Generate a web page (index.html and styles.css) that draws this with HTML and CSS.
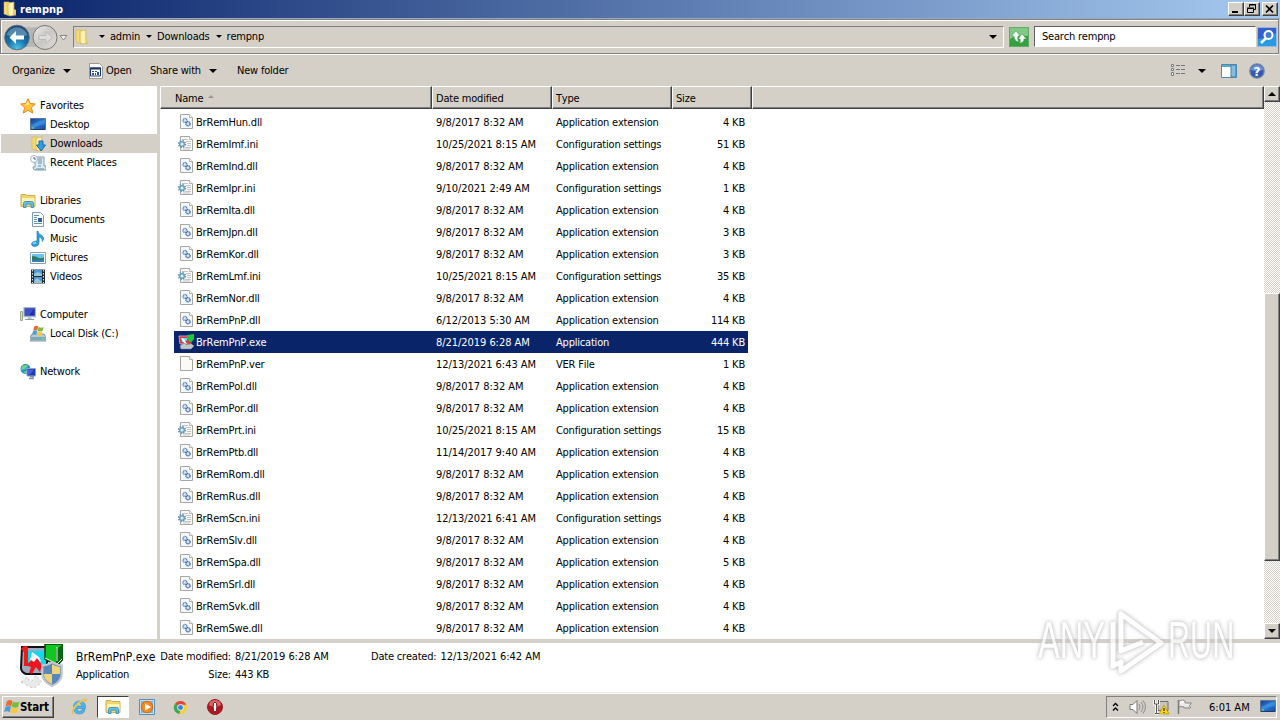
FILE: index.html
```html
<!DOCTYPE html>
<html lang="en">
<head>
<meta charset="utf-8">
<title>rempnp</title>
<link rel="stylesheet" href="styles.css">
</head>
<body>
<svg class="defs" aria-hidden="true">
  <defs>
    <linearGradient id="gold" x2="1"><stop offset="0" stop-color="#f8e795"/><stop offset=".5" stop-color="#fff8c5"/><stop offset="1" stop-color="#dfbd4b"/></linearGradient>
    <linearGradient id="screen" x2="1" y2="1"><stop offset="0" stop-color="#173d8f"/><stop offset=".5" stop-color="#2878d2"/><stop offset="1" stop-color="#164a9c"/></linearGradient>
    <radialGradient id="backfill" cx=".5" cy=".95" r=".9"><stop offset="0" stop-color="#4cc6ea"/><stop offset=".45" stop-color="#1673ab"/><stop offset="1" stop-color="#1b456f"/></radialGradient>
    <linearGradient id="fwdfill" y2="1"><stop offset="0" stop-color="#eee"/><stop offset=".5" stop-color="#c9c7c4"/><stop offset="1" stop-color="#e2e0de"/></linearGradient>
    <linearGradient id="flagfade" x2="0" y2="1"><stop offset="0" stop-color="#fff"/><stop offset="1" stop-color="#ddd"/></linearGradient>
  </defs>
  <symbol id="folder" viewBox="0 0 16 16"><path d="M2 1h5l1 2v12l-6-2z" fill="#f3d978" stroke="#d4b145" stroke-width=".6"/><path d="M6 2l6-1v12l2 1-6 1-2-2z" fill="url(#gold)" stroke="#cba93c" stroke-width=".6"/><path d="M12 8l2 1v5l-2-1z" fill="#e8cd6d"/></symbol>
  <symbol id="dll" viewBox="0 0 16 16"><path d="M2.500.5h9l3 3v11h-12z" fill="#f4f8fc" stroke="#a9a7a2"/><path d="M11.500.5v3h3" fill="#fff" stroke="#b5b3af"/><circle cx="7" cy="6.500" r="2" fill="#dce9f8" stroke="#5c80b5" stroke-width="1.300" stroke-dasharray="1.200 .4"/><circle cx="10" cy="9.800" r="2.100" fill="#d4e3f5" stroke="#3f659f" stroke-width="1.300" stroke-dasharray="1.200 .4"/></symbol>
  <symbol id="ini" viewBox="0 0 16 16"><path d="M2.500.5h9l3 3v11h-12z" fill="#fafafa" stroke="#a5a5a2"/><path d="M11.500.5v3h3" fill="#fff" stroke="#b5b5b2"/><path d="M4 3.500h6M8 5.500h5M9 7.500h4M9 9.500h4M7 11.500h6M5 13h7" fill="none" stroke="#c3c3c3"/><circle cx="4" cy="8" r="3.200" fill="none" stroke="#6593b5" stroke-width="2" stroke-dasharray="1.300 1.200"/><circle cx="4" cy="8" r="2.300" fill="#e4f2fa" stroke="#6c9fbd" stroke-width="1.500"/></symbol>
  <symbol id="blank" viewBox="0 0 16 16"><path d="M2.500.5h9l3 3v11h-12z" fill="#fbfaf7" stroke="#a5a5a0"/><path d="M11.500.5v3h3" fill="#fff" stroke="#b5b5b0"/></symbol>
  <symbol id="exe" viewBox="0 0 44 44"><path d="M3 3h25v27H7q-5-2-5-6z" fill="#9faac0" stroke="#111" stroke-width="2"/><path d="M7 7h20v15H9z" fill="#10d8ef"/><path d="M2 5q3-5 7-2v19H5V8z" fill="#f31818"/><path d="M13 8l7 5 2 4-4 4-8-1z" fill="#f6f9fa"/><path d="M7 22l5-6 3 2 3-4 5 7-2 7-4-5-4 7-3-1 2-6-3-1z" fill="#ec1520"/><path d="M26 0h18v15l-6 7-12-7z" fill="#10c722" stroke="#063d0b" stroke-width="1.500"/><path d="M37 5l6-4v15l-6 6z" fill="#066a12"/><path d="M38 3v14M26 14l12 6 5-5" stroke="#eee" fill="none"/><path d="M2 38l6-5 4 5 5-7 6 7-8 7z" fill="#e9e9e9" stroke="#c1c1c1" stroke-dasharray="2 3"/></symbol>
  <symbol id="exesmall" viewBox="0 0 16 16"><path d="M1 2h9v8H2z" fill="#e2343b" stroke="#9caec0"/><path d="M3 4h6v4H4z" fill="#6edbe9"/><path d="M3 4l3 1 3 5-3-1z" fill="#fff"/><path d="M9 1l7-1v5l-3 4-4-3z" fill="#21c53e"/><path d="M2 12l4-3 3 2 2-3 5 4-3 3H3z" fill="#bec8c9" stroke="#7f8b99" stroke-width=".5"/><path d="M7 7l4 4 2-2-3-3z" fill="#d73e45"/></symbol>
  <symbol id="shield" viewBox="0 0 20 24"><path d="M10 1q5 3 9 3v8q0 7-9 11Q1 19 1 12V4q5 0 9-3z" fill="#5688bd" stroke="#c3c7cb" stroke-width="2"/><path d="M10 12V21.500Q2.500 18 2.500 12zM10 3v9h7.500V5.500Q13 5 10 3z" fill="#f0d477"/></symbol>
  <symbol id="star" viewBox="0 0 16 16"><path d="M8 .7l2.200 4.800 5.200.5-4 3.600 1.300 5.400L8 12.300 3.300 15l1.300-5.400L.6 6l5.200-.5z" fill="#ffc43a" stroke="#e58520"/><path d="M8 3l1.300 3.800H5L8 3z" fill="#ffec94"/></symbol>
  <symbol id="desktop" viewBox="0 0 16 16"><path d="M.5 1.500h15v11H.5z" fill="url(#screen)" stroke="#5c7495"/><path d="M1 8q7-4 14-5v4Q8 8 1 12z" fill="#4ca4e9" opacity=".5"/><path d="M1 12.500h14" stroke="#1c3a70"/><path d="M2 11h2" stroke="#8fd35d"/></symbol>
  <symbol id="down" viewBox="0 0 16 16"><use href="#folder"/><path d="M9 5h4v4h2.500L11 15 6.500 9H9z" fill="#309ce2" stroke="#166cae"/></symbol>
  <symbol id="recent" viewBox="0 0 16 16"><path d="M5 2h9v9h2v4H5q-2 0-2-3h2z" fill="#dcebf2" stroke="#7f9aab"/><path d="M8 4h4M8 6h4M8 8h4M8 11h3M6 14h8" stroke="#668fa8"/><circle cx="4" cy="4" r="3.500" fill="#f7fafc" stroke="#a4b6c3"/><path d="M4 2v2h2" stroke="#567" fill="none"/></symbol>
  <symbol id="library" viewBox="0 0 16 16"><path d="M1 1.500h5l1 1h8v11H1z" fill="#efd571" stroke="#d0b050"/><path d="M2 5h12.500v6H2z" fill="#fff4ae"/><path d="M3.500 14.500v-4q0-2 2-2h6q2 0 2 2v4h-2.500V11H6v3.500z" fill="#64c3ee" stroke="#4292c0"/></symbol>
  <symbol id="document" viewBox="0 0 16 16"><path d="M2.500.5h8l3 3v11h-11z" fill="#f9fcff" stroke="#7d9caf"/><path d="M4 3.500h5M4 5.500h3M4 7.500h3M4 9.500h3M4 11.500h8" stroke="#678faa"/><path d="M8 6h4v4H8z" fill="#315f94"/></symbol>
  <symbol id="music" viewBox="0 0 16 16"><path d="M8 0q0 3 4 4.500 3 2 .5 6 0-4-3.500-4.500v6q-.5 3.500-4 3.500t-3.500-2.500q.5-3 5.500-3V0z" fill="#319ddd" stroke="#1873b5" stroke-width=".6"/><ellipse cx="4.500" cy="12" rx="2" ry="1.300" fill="#78ccf5"/></symbol>
  <symbol id="picture" viewBox="0 0 16 16"><path d="M.5 2.500h15v11H.5z" fill="#fff" stroke="#8ba2ae"/><path d="M2 4h12v8H2z" fill="#6bc4ee"/><path d="M2 6q4 0 7 2 3 1 5-1v5H2z" fill="#2c7c67"/><path d="M2 10h12v2H2z" fill="#347fbc"/></symbol>
  <symbol id="video" viewBox="0 0 16 16"><path d="M1 .5h14v14H1z" fill="#222d36"/><path d="M4 1h8v6H4zM4 8h8v6H4z" fill="#4e9ad0"/><path d="M4 5l4-2 4 2v2H4zM4 12l3-3 5 4v1H4z" fill="#99c6d9"/><path d="M2.500 1v13M13.500 1v13" stroke="#dce3e8" stroke-dasharray="1.500 1.500"/></symbol>
  <symbol id="computer" viewBox="0 0 16 16"><path d="M.5 4.500h2v9h-2z" fill="#d8e1b2" stroke="#a1aa90"/><path d="M4 .5h11.500v9H4z" fill="#1e31b6" stroke="#adb9c7" stroke-width="1.300"/><path d="M5 1.500h9L9 8.500H5z" fill="#5368db" opacity=".6"/><path d="M8 10h3l1 2.500H7z" fill="#bcc6cf"/><path d="M5 12.500h9" stroke="#8b98a5"/></symbol>
  <symbol id="winflag" viewBox="0 0 16 16"><path d="M3 2q3-2 5.500 0L7 7.500Q5 5.500 1.500 7.500z" fill="#ed6a2f"/><path d="M9 2.500q3 2 6.500 0L14 8q-3 1.500-6.500-.5z" fill="#77bd40"/><path d="M1.500 8q3-2 5.500 0l-1.500 5.500Q4 11.500 0 13z" fill="#4c9de0"/><path d="M7.500 8q3 2 6.500.5L12.500 14q-3 1.500-6.500-1z" fill="#fac83f"/></symbol>
  <symbol id="disk" viewBox="0 0 16 16"><path d="M2 8h12l2 3v4H0v-4z" fill="#bccbd2" stroke="#839aa6"/><path d="M1 11h14v3H1z" fill="#7da9ba"/><path d="M12 13h2" stroke="#5dff52"/><use href="#winflag" x="2" y="-1" width="12" height="12"/></symbol>
  <symbol id="network" viewBox="0 0 16 16"><circle cx="5.500" cy="5" r="5" fill="#2495bf"/><path d="M2 2q4-2 6 0L5 5l-4 1zM3 8l4-1v3z" fill="#75cf8c"/><path d="M7 4.500h8.500v7.500H7z" fill="#2039bc" stroke="#8fa8c5"/><path d="M8 5.500h6l-4 5H8z" fill="#4861d6"/><path d="M10 12.500h3v2H9" fill="none" stroke="#7890ad" stroke-width="1.500"/></symbol>
</svg>

<header class="titlebar">
  <svg class="icon"><use href="#folder"/></svg><strong>rempnp</strong>
  <div class="winbuttons">
    <button class="bevel"><svg viewBox="0 0 14 12"><path d="M3 9h6" stroke="#000" stroke-width="2"/></svg></button><button class="bevel"><svg viewBox="0 0 14 12"><path d="M4.500 4V1.500h6v5H9M4 2h7M2.500 5.500h6v4h-6zM2 5h7" stroke="#000" fill="none"/></svg></button><button class="bevel close"><svg viewBox="0 0 14 12"><path d="M3 2.500l7 7M10 2.500l-7 7" stroke="#000" stroke-width="1.700"/></svg></button>
  </div>
</header>

<nav class="navbar">
  <svg class="history" viewBox="0 0 70 31"><path d="M17 3q13 5 27 0v24q-14-5-27 0z" fill="#b5b5b5"/><circle cx="16" cy="15.500" r="12.300" fill="url(#backfill)" stroke="#5c7182"/><path d="M5.500 13a11 11 0 0 1 21 0q-10 4-21 0z" fill="#b5d4e7" opacity=".4"/><path d="M15 9L8.500 15.500 15 22v-4.500h8v-4h-8z" fill="#fff"/><circle cx="44" cy="15.500" r="12" fill="url(#fwdfill)" stroke="#777"/><path d="M38 13.500h7v-4l6 6-6 6v-4h-7z" fill="#dedddb" stroke="#bdbbb8"/><path d="M59 13.500h7L62.500 18z" fill="#eee" stroke="#888"/></svg>
  <div class="address"><svg class="icon"><use href="#folder"/></svg><i class="tri"></i><span>admin</span><i class="tri"></i><span>Downloads</span><i class="tri"></i><span>rempnp</span><i class="tri last"></i></div>
  <svg class="refresh" viewBox="0 0 20 20"><rect x=".5" y=".5" width="19" height="19" fill="#32a33e" stroke="#65a86a"/><path d="M1 1h18v8Q9 8 1 12z" fill="#7fc985"/><path d="M7 4L2.500 9H5q0 5 5 6-2-3-1-6h2zM13 7l4.500 5H15q0 4-5 4 2-1 1-4H9z" fill="#fff" stroke="#368e3d" stroke-width=".5"/></svg>
  <div class="search">Search rempnp</div>
  <svg class="find" viewBox="0 0 20 20"><rect x=".5" y=".5" width="19" height="19" fill="#3460cf" stroke="#99b7e2"/><path d="M1 12q9 0 18-6v13H1z" fill="#269be4"/><path d="M9 11l-5 5" stroke="#fff" stroke-width="2.500"/><circle cx="11.500" cy="8" r="4" fill="#427fd4" stroke="#fff" stroke-width="2"/></svg>
</nav>

<div class="toolbar">
  <span class="organize">Organize</span><i class="tri big"></i>
  <svg class="openicon" viewBox="0 0 16 16"><path d="M1.500.5h10l3 3v12h-13z" fill="#fff" stroke="#999"/><path d="M2.500 5h10v8h-10z" fill="#fff" stroke="#193466"/><path d="M2 5.500h11" stroke="#193466" stroke-width="2"/><path d="M4 8h2v1H4zM7 8h2v1H7zM4 10h2v2H4zM7 10h1v2H7zM9 9h2v3H9z" fill="#2750a0"/></svg>
  <span class="open">Open</span><span class="share">Share with</span><i class="tri big"></i><span class="new">New folder</span>
  <div class="tools">
    <svg class="views" viewBox="0 0 16 13"><path d="M1.500.5h2v2h-2zM1.500 4.500h2v2h-2zM1.500 8.500h2v3h-2z" fill="#fff" stroke="#777"/><path d="M6 1.500h4m1 0h4M6 5.500h4m1 0h4M6 9.500h4m1 0h4" stroke="#727782"/></svg>
    <i class="tri big"></i>
    <svg class="preview" viewBox="0 0 16 14"><path d="M.5.5h15v13H.5z" fill="#fff" stroke="#4b8bad"/><path d="M1 2h9" stroke="#5da6c9" stroke-width="2"/><path d="M10 1h5v12h-5z" fill="#83bddd" stroke="#4383a6"/></svg>
    <svg class="help" viewBox="0 0 16 16"><circle cx="8" cy="8" r="7.200" fill="#3158b3" stroke="#7688a8" stroke-width="1.300"/><path d="M2 7a6 5 0 0 1 12 0q-6 2-12 0z" fill="#6b91d8"/><text x="8" y="12.500" text-anchor="middle">?</text></svg>
  </div>
</div>

<main class="content">
  <aside class="tree">
    <div class="node root"><svg class="icon"><use href="#star"/></svg>Favorites</div>
    <div class="node"><svg class="icon"><use href="#desktop"/></svg>Desktop</div>
    <div class="node active"><svg class="icon"><use href="#down"/></svg>Downloads</div>
    <div class="node"><svg class="icon"><use href="#recent"/></svg>Recent Places</div>
    <div class="node root gap"><svg class="icon"><use href="#library"/></svg>Libraries</div>
    <div class="node"><svg class="icon"><use href="#document"/></svg>Documents</div>
    <div class="node"><svg class="icon"><use href="#music"/></svg>Music</div>
    <div class="node"><svg class="icon"><use href="#picture"/></svg>Pictures</div>
    <div class="node"><svg class="icon"><use href="#video"/></svg>Videos</div>
    <div class="node root gap"><svg class="icon"><use href="#computer"/></svg>Computer</div>
    <div class="node"><svg class="icon"><use href="#disk"/></svg>Local Disk (C:)</div>
    <div class="node root gap"><svg class="icon"><use href="#network"/></svg>Network</div>
  </aside>
  <section class="files">
    <div class="head"><span>Name <i class="sort"></i></span><span>Date modified</span><span>Type</span><span>Size</span><span></span></div>
    <div class="rows">
      <div class="row"><svg class="icon"><use href="#dll"/></svg><span>BrRemHun.dll</span><span class="date">9/8/2017 8:32 AM</span><span class="type">Application extension</span><span>4 KB</span></div>
      <div class="row"><svg class="icon"><use href="#ini"/></svg><span>BrRemImf.ini</span><span class="date">10/25/2021 8:15 AM</span><span class="type">Configuration settings</span><span>51 KB</span></div>
      <div class="row"><svg class="icon"><use href="#dll"/></svg><span>BrRemInd.dll</span><span class="date">9/8/2017 8:32 AM</span><span class="type">Application extension</span><span>4 KB</span></div>
      <div class="row"><svg class="icon"><use href="#ini"/></svg><span>BrRemIpr.ini</span><span class="date">9/10/2021 2:49 AM</span><span class="type">Configuration settings</span><span>1 KB</span></div>
      <div class="row"><svg class="icon"><use href="#dll"/></svg><span>BrRemIta.dll</span><span class="date">9/8/2017 8:32 AM</span><span class="type">Application extension</span><span>4 KB</span></div>
      <div class="row"><svg class="icon"><use href="#dll"/></svg><span>BrRemJpn.dll</span><span class="date">9/8/2017 8:32 AM</span><span class="type">Application extension</span><span>3 KB</span></div>
      <div class="row"><svg class="icon"><use href="#dll"/></svg><span>BrRemKor.dll</span><span class="date">9/8/2017 8:32 AM</span><span class="type">Application extension</span><span>3 KB</span></div>
      <div class="row"><svg class="icon"><use href="#ini"/></svg><span>BrRemLmf.ini</span><span class="date">10/25/2021 8:15 AM</span><span class="type">Configuration settings</span><span>35 KB</span></div>
      <div class="row"><svg class="icon"><use href="#dll"/></svg><span>BrRemNor.dll</span><span class="date">9/8/2017 8:32 AM</span><span class="type">Application extension</span><span>4 KB</span></div>
      <div class="row"><svg class="icon"><use href="#dll"/></svg><span>BrRemPnP.dll</span><span class="date">6/12/2013 5:30 AM</span><span class="type">Application extension</span><span>114 KB</span></div>
      <div class="row selected"><svg class="icon"><use href="#exesmall"/></svg><span>BrRemPnP.exe</span><span class="date">8/21/2019 6:28 AM</span><span class="type">Application</span><span>444 KB</span></div>
      <div class="row"><svg class="icon"><use href="#blank"/></svg><span>BrRemPnP.ver</span><span class="date">12/13/2021 6:43 AM</span><span class="type">VER File</span><span>1 KB</span></div>
      <div class="row"><svg class="icon"><use href="#dll"/></svg><span>BrRemPol.dll</span><span class="date">9/8/2017 8:32 AM</span><span class="type">Application extension</span><span>4 KB</span></div>
      <div class="row"><svg class="icon"><use href="#dll"/></svg><span>BrRemPor.dll</span><span class="date">9/8/2017 8:32 AM</span><span class="type">Application extension</span><span>4 KB</span></div>
      <div class="row"><svg class="icon"><use href="#ini"/></svg><span>BrRemPrt.ini</span><span class="date">10/25/2021 8:15 AM</span><span class="type">Configuration settings</span><span>15 KB</span></div>
      <div class="row"><svg class="icon"><use href="#dll"/></svg><span>BrRemPtb.dll</span><span class="date">11/14/2017 9:40 AM</span><span class="type">Application extension</span><span>4 KB</span></div>
      <div class="row"><svg class="icon"><use href="#dll"/></svg><span>BrRemRom.dll</span><span class="date">9/8/2017 8:32 AM</span><span class="type">Application extension</span><span>5 KB</span></div>
      <div class="row"><svg class="icon"><use href="#dll"/></svg><span>BrRemRus.dll</span><span class="date">9/8/2017 8:32 AM</span><span class="type">Application extension</span><span>4 KB</span></div>
      <div class="row"><svg class="icon"><use href="#ini"/></svg><span>BrRemScn.ini</span><span class="date">12/13/2021 6:41 AM</span><span class="type">Configuration settings</span><span>4 KB</span></div>
      <div class="row"><svg class="icon"><use href="#dll"/></svg><span>BrRemSlv.dll</span><span class="date">9/8/2017 8:32 AM</span><span class="type">Application extension</span><span>4 KB</span></div>
      <div class="row"><svg class="icon"><use href="#dll"/></svg><span>BrRemSpa.dll</span><span class="date">9/8/2017 8:32 AM</span><span class="type">Application extension</span><span>5 KB</span></div>
      <div class="row"><svg class="icon"><use href="#dll"/></svg><span>BrRemSrl.dll</span><span class="date">9/8/2017 8:32 AM</span><span class="type">Application extension</span><span>4 KB</span></div>
      <div class="row"><svg class="icon"><use href="#dll"/></svg><span>BrRemSvk.dll</span><span class="date">9/8/2017 8:32 AM</span><span class="type">Application extension</span><span>4 KB</span></div>
      <div class="row"><svg class="icon"><use href="#dll"/></svg><span>BrRemSwe.dll</span><span class="date">9/8/2017 8:32 AM</span><span class="type">Application extension</span><span>4 KB</span></div>
    </div>
  </section>
  <div class="scroll"><div class="arrow bevel"><i class="tri up"></i></div><div class="track"></div><div class="thumb bevel"></div><div class="track rest"></div><div class="arrow bevel"><i class="tri"></i></div></div>
</main>

<section class="details">
  <div class="preview-icon"><svg class="large"><use href="#exe"/></svg><svg class="shield"><use href="#shield"/></svg></div>
  <div class="filename"><div class="name">BrRemPnP.exe</div><div>Application</div></div>
  <div class="props"><span>Date modified:</span><span class="date">8/21/2019 6:28 AM</span><span>Size:</span><span>443 KB</span></div>
  <div class="created"><span>Date created:</span><span class="date">12/13/2021 6:42 AM</span></div>
</section>

<footer class="taskbar">
  <div class="start bevel"><svg class="icon"><use href="#winflag"/></svg><b>Start</b></div>
  <svg class="app ie" viewBox="0 0 18 18"><path d="M15 11.500Q14 16 9.500 16 3.500 16 3.500 9.500T9.500 3q6.500 0 6 7.500H7q0 3 2.500 3 2 0 2.500-2zM7 8h5Q12 5.500 9.500 5.500T7 8" fill="#4cb4ea" stroke="#2e8fca" stroke-width=".6" fill-rule="evenodd"/><path d="M2 16Q0 12 7 5q8-6 10-4 1 1-1 4 .5-3-4-1-6 4-8.500 9-1 3 2 2-2.500 2-3.500 1z" fill="#e8c457"/></svg>
  <div class="task"><svg class="icon"><use href="#library"/></svg></div>
  <svg class="app wmp" viewBox="0 0 16 16"><path d="M.5.5h15v15H.5z" fill="#c4e0f2" stroke="#568fb7"/><path d="M2 2h12v12H2z" fill="#78b4df"/><circle cx="8" cy="8" r="5.700" fill="#f58b20" stroke="#d36c0d"/><path d="M6 4.500L12 8l-6 3.500z" fill="#fff"/></svg>
  <svg class="app chrome" viewBox="0 0 16 16"><circle cx="8" cy="8" r="7" fill="#f4cf3e"/><path d="M8 8L2 4.200A7 7 0 0 1 14.200 5H8z" fill="#db493e"/><path d="M8 8l-1 7A7 7 0 0 1 2 4.200z" fill="#3aa65a"/><circle cx="8" cy="8" r="3.200" fill="#3f83d6" stroke="#f7f7f7"/></svg>
  <svg class="app opera" viewBox="0 0 16 16"><circle cx="8" cy="8" r="7.500" fill="#b31821" stroke="#8c222b"/><path d="M2 6a6 5 0 0 1 12 0q-6 4-12 0z" fill="#dc6365"/><ellipse cx="8" cy="8" rx="1.900" ry="5" fill="#fff" stroke="#78121a"/></svg>
  <div class="tray">
    <svg class="chev" viewBox="0 0 7 10"><path d="M1 4l2.500-2.500L6 4M1 8.500L3.500 6 6 8.500" fill="none" stroke="#000" stroke-width="1.400"/></svg>
    <svg class="sound" viewBox="0 0 17 16"><path d="M1 5.500h3l4-4v13l-4-4H1z" fill="#fff" stroke="#777"/><path d="M10 5q2 3 0 6M12 3q4 5 0 10M14 1.500q5 6.500 0 13" fill="none" stroke="#8b8b8b"/></svg>
    <svg class="net" viewBox="0 0 16 16"><path d="M5 2.500h10v9H5z" fill="#c8c5bf" stroke="#6d6d6d"/><path d="M1.500 1v4h4V1M3.500 5v10M2 14.500h8" fill="none" stroke="#fff" stroke-width="2.500"/><path d="M1.500 1v4h4V1M3.500 5v10M2 14.500h8" fill="none" stroke="#555"/><path d="M11 6l5 9H6z" fill="#fbd718" stroke="#b08d00" stroke-width=".7"/><path d="M11 9v3m0 1v1" stroke="#000"/></svg>
    <svg class="flag" viewBox="0 0 16 16"><path d="M1.500 1v14" stroke="#777" stroke-width="1.500"/><path d="M2 2q4-2 6 0v2h6.500l-2 2.500 1 2.500H7V8Q5 7 2 8z" fill="url(#flagfade)" stroke="#888"/></svg>
    <span class="clock">6:01 AM</span>
    <svg class="icon"><use href="#desktop"/></svg>
  </div>
</footer>

<div class="watermark"><span>ANY</span><svg viewBox="0 0 60 68"><path d="M7 15v44l8-4v9L55 36 15 7v37l22-9" /></svg><span class="run">RUN</span></div>
</body>
</html>
```
FILE: styles.css
```css
* { box-sizing: border-box; }
body { margin: 0; width: 1280px; height: 720px; overflow: hidden; display: flex; flex-direction: column; background: #d4d0c8; color: #000; font: 11px/14px "DejaVu Sans Condensed", "DejaVu Sans", sans-serif; font-kerning: none; letter-spacing: -0.2px; white-space: nowrap; position: relative; }
svg { display: block; flex: none; }
.defs { position: absolute; width: 0; height: 0; }
.icon { width: 16px; height: 16px; }
.bevel { background: #d4d0c8; border: 1px solid; border-color: #fff #404040 #404040 #fff; box-shadow: inset -1px -1px #808080; }
.tri { flex: none; width: 0; height: 0; border: 3px solid transparent; border-top: 3px solid #000; border-bottom: 0; }
.tri.big { border-width: 4px 4px 0; }
.tri.up { border-width: 0 4px 4px; border-bottom: 4px solid #000; }
.date { letter-spacing: -0.05px; }

.titlebar { height: 19px; display: flex; align-items: center; padding: 0 2px; background: linear-gradient(90deg, #0a246a, #a6caf0); color: #fff; border-bottom: 1px solid #9aa9c0; }
.titlebar strong { margin: 1px 0 0 2px; font-size: 11px; letter-spacing: 0; }
.winbuttons { margin-left: auto; display: flex; }
.winbuttons button { width: 16px; height: 14px; padding: 0; }
.winbuttons svg { width: 14px; height: 12px; }
.winbuttons .close { margin-left: 2px; }

.navbar { height: 35px; margin-right: 1px; display: flex; align-items: center; border: 1px solid #808080; box-shadow: inset 1px 1px #fff, 0 1px #fff; }
.history { width: 70px; height: 31px; margin-top: 1px; }
.address { width: 931px; height: 22px; margin-left: 2px; display: flex; align-items: center; border: 1px solid; border-color: #808080 #fff #fff #808080; }
.address .tri { margin: 0 5px 0 9px; }
.address span + .tri { margin: 0 5px 0 6px; }
.address .tri.last { border-width: 4px 4px 0; margin: 0 6px 0 auto; }
.refresh { width: 20px; height: 20px; margin-left: 5px; }
.search { width: 222px; height: 21px; margin-left: 5px; padding: 3px 0 0 7px; background: #fff; border: 1px solid; border-color: #606060 #fff #fff #606060; }
.find { width: 20px; height: 20px; margin-left: 1px; }

.toolbar { height: 32px; display: flex; align-items: center; padding: 1px 0 0 12px; }
.organize { width: 51px; }
.openicon { width: 16px; height: 16px; margin: 0 2px 0 17px; }
.open { width: 44px; }
.share { width: 59px; }
.new { margin-left: 20px; }
.tools { margin-left: auto; display: flex; align-items: center; padding-right: 15px; }
.views { width: 16px; height: 13px; margin-right: 12px; }
.preview { width: 16px; height: 14px; margin: 0 12px 0 15px; }
.help { width: 16px; height: 16px; }
.help text { font: bold 12px "DejaVu Sans", sans-serif; fill: #fff; }

.content { height: 553px; display: flex; background: #fff; }
.tree { width: 160px; padding-top: 10px; border-right: 3px solid #d4d0c8; }
.node { height: 19px; padding-left: 30px; display: flex; align-items: center; gap: 4px; }
.node.root { padding-left: 20px; }
.node.gap { margin-top: 19px; }
.node.active { background: #d4d0c8; margin-left: 1px; padding-left: 29px; }
.files { width: 1104px; }
.head { height: 23px; display: grid; grid-template-columns: 272px 120px 120px 80px 512px; }
.head span { background: #d4d0c8; border: 1px solid; border-color: #fff #404040 #404040 #fff; box-shadow: inset -1px -1px #808080; padding: 5px 0 0 3px; }
.head span:first-child { padding-left: 14px; }
.sort { display: inline-block; margin: 0 0 4px 2px; border: 3px solid transparent; border-top: 0; border-bottom: 3px solid #999; }
.rows { padding: 2px 0 0 14px; height: 530px; overflow: hidden; }
.row { width: 574px; height: 22px; padding: 0 3px 0 4px; display: grid; grid-template-columns: 18px 240px 120px 145px 44px; align-items: center; }
.row span { padding-top: 1px; }
.row :last-child { text-align: right; }
.row.selected { background: #0a246a; color: #fff; }
.scroll { width: 16px; display: flex; flex-direction: column; }
.arrow { height: 16px; display: flex; align-items: center; justify-content: center; }
.arrow .tri { border-left-width: 4px; border-right-width: 4px; }
.arrow .tri:not(.up) { border-top-width: 4px; }
.track { height: 191px; background: repeating-conic-gradient(#d4d0c8 0 25%, #fff 0 50%) 0 0 / 2px 2px; }
.thumb { height: 268px; }
.track.rest { height: 62px; }

.details { height: 54px; border-top: 4px solid #d4d0c8; border-bottom: 1px solid #e8e8e8; background: #fff; display: flex; padding-left: 19px; }
.preview-icon { width: 57px; height: 48px; position: relative; }
.large { width: 44px; height: 44px; margin-top: 1px; }
.shield { position: absolute; left: 22px; top: 18px; width: 22px; height: 26px; }
.filename { width: 83px; padding-top: 7px; display: grid; grid-template-rows: 18px 18px; align-content: start; }
.filename .name { font-size: 12px; letter-spacing: 0; }
.props { width: 212px; padding-top: 7px; display: grid; grid-template: 18px 18px / 72px 1fr; column-gap: 4px; }
.props span:nth-child(odd) { text-align: right; }
.created { padding-top: 7px; display: flex; gap: 4px; }

.taskbar { flex: 1; border-top: 1px solid #fff; display: flex; align-items: center; padding: 0 2px; }
.start { width: 52px; height: 22px; display: flex; align-items: center; gap: 0; padding-left: 1px; }
.start b { font-size: 11.5px; letter-spacing: -0.1px; }
.app { width: 18px; height: 18px; }
.ie { margin-left: 16px; }
.task { width: 32px; height: 22px; margin-left: 9px; display: flex; align-items: center; justify-content: center; background: #fff; border: 1px solid; border-color: #404040 #fff #fff #404040; }
.wmp { width: 16px; height: 16px; margin-left: 10px; }
.chrome { width: 15px; height: 15px; margin-left: 18px; }
.opera { width: 16px; height: 16px; margin-left: 19px; }
.tray { margin-left: auto; margin-right: 1px; width: 171px; height: 22px; display: flex; align-items: center; border: 1px solid; border-color: #808080 #fff #fff #808080; padding: 0 0 0 5px; }
.chev { width: 7px; height: 10px; }
.sound { width: 17px; height: 16px; margin-left: 10px; }
.net { width: 16px; height: 16px; margin-left: 7px; }
.flag { width: 16px; height: 16px; margin-left: 8px; }
.clock { width: 51px; margin-left: 16px; padding-top: 1px; letter-spacing: 0; }
.watermark { position: absolute; left: 1038px; top: 606px; width: 196px; height: 70px; display: flex; align-items: center; opacity: .75; filter: drop-shadow(0 0 2px #aaa) drop-shadow(0 0 1px #ddd); }
.watermark svg { width: 60px; height: 68px; margin: 0 2px; }
.watermark path { fill: none; stroke: #fff; stroke-width: 5px; stroke-linejoin: round; }
.watermark span { width: 66px; font: 51px/60px "Liberation Sans", sans-serif; letter-spacing: 0; color: #fff; transform: scaleX(.64); transform-origin: 0 50%; }
.watermark .run { transform: scaleX(.6); }
```
